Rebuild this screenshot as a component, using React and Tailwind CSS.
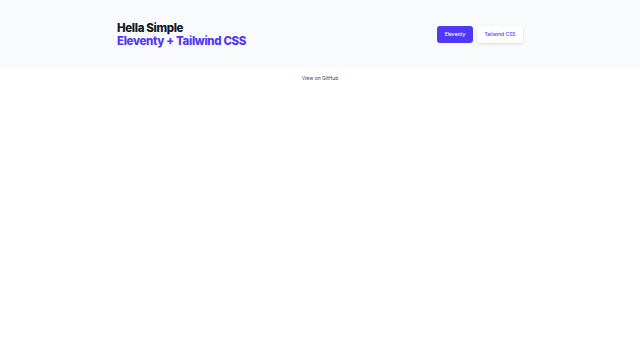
import React from "react";

export default function App() {
  return (
    <div className="min-h-[360px] bg-white font-['Inter',sans-serif]">
      {/* CTA band */}
      <div className="bg-gray-50 h-[69px]">
        <div className="mx-auto w-[406px] h-full flex items-center justify-between">
          <h2 className="text-[11.5px] leading-[13px] font-extrabold tracking-[-0.03em] text-gray-900 pt-[1px]">
            <span className="block">Hella Simple</span>
            <span className="block text-indigo-600">Eleventy + Tailwind CSS</span>
          </h2>
          <div className="flex gap-[4px]">
            <a className="flex items-center justify-center w-[36px] h-[17px] rounded-[3px] bg-indigo-600 text-white text-[5px] font-medium">
              Eleventy
            </a>
            <a className="flex items-center justify-center w-[46px] h-[17px] rounded-[3px] bg-white text-indigo-600 text-[5px] font-medium shadow-sm">
              Tailwind CSS
            </a>
          </div>
        </div>
      </div>
      <div className="flex justify-center pt-[5px]">
        <a className="text-[5px] leading-[8px] text-gray-700">View on GitHub</a>
      </div>
    </div>
  );
}
